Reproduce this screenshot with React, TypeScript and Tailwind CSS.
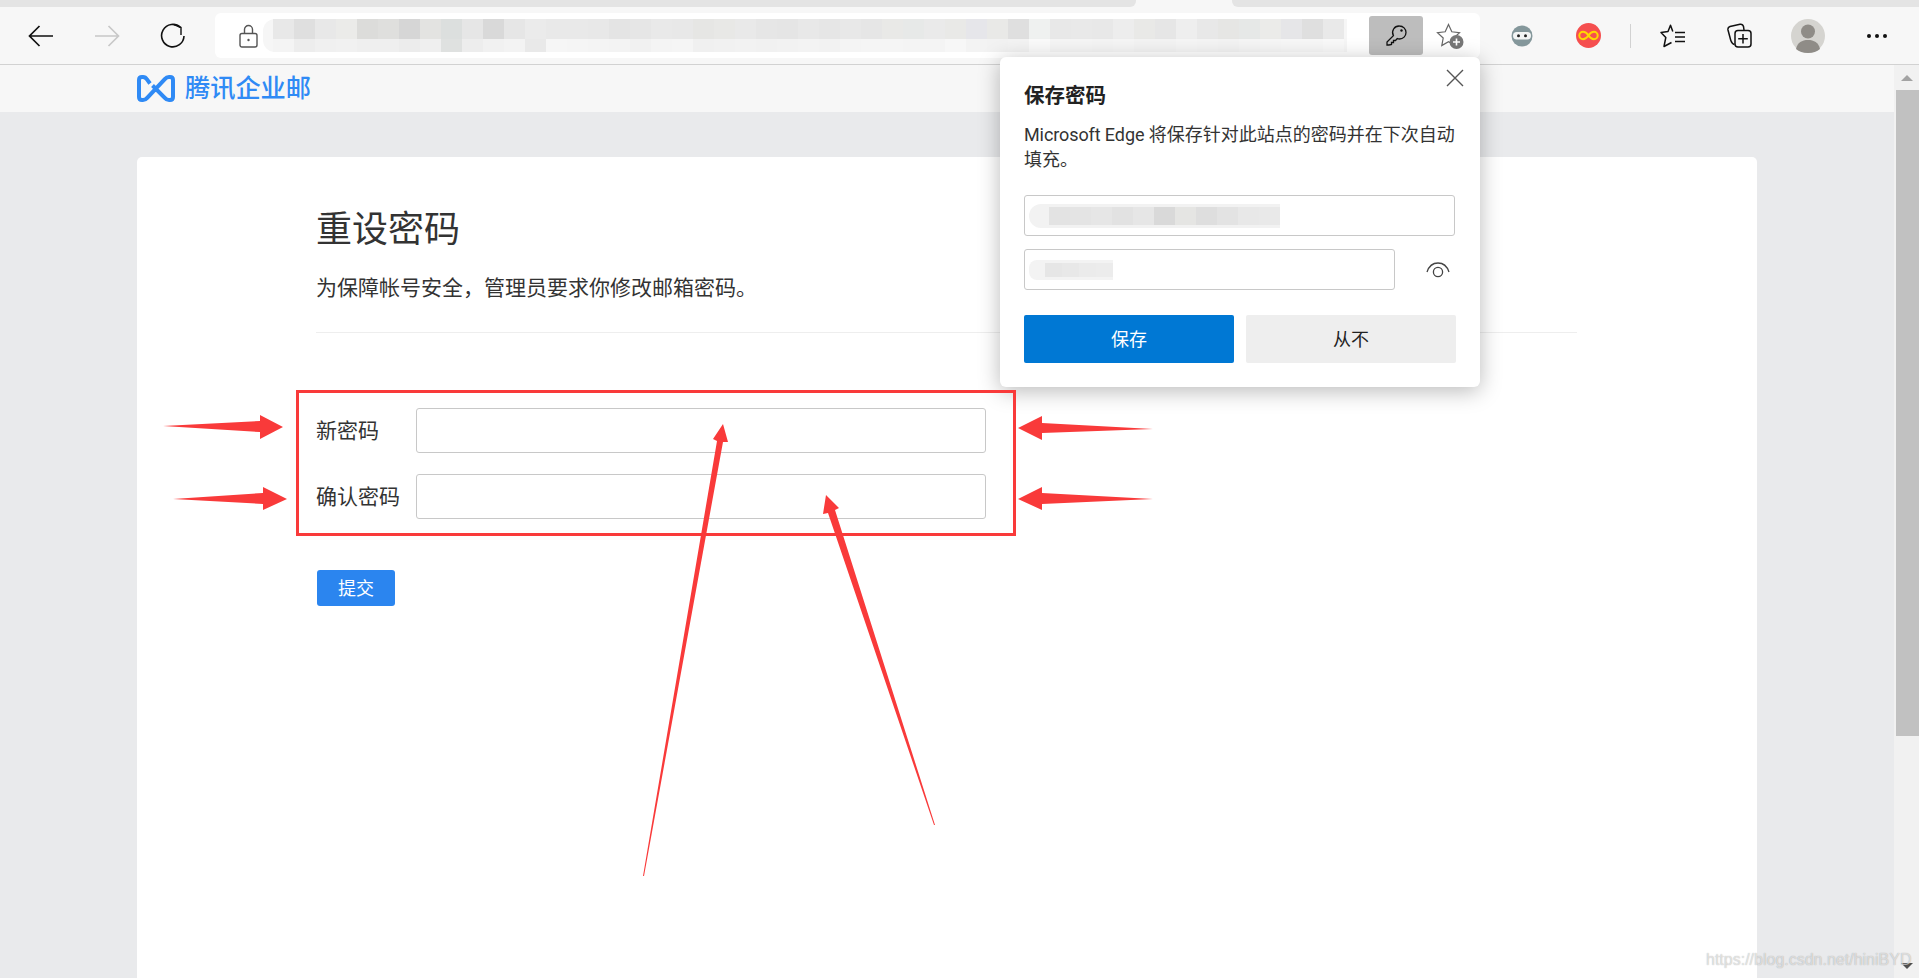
const TOP_BLUR = ["#e8e8e8","#dfdfdf","#e8e8e8","#ebebe9","#dcdcda","#dfdfdd","#d6d6d6","#e3e3e1","#dcdfde","#e6e6e6","#d9d9d9","#e6e6e6","#ebebeb","#e9e9e9","#e9e9e9","#e8e8e8","#e4e4e4","#e6e6e6","#e9e9e9","#e8e8e8","#e6e6e4","#e8e8e6","#e9e9e9","#e6e6e6","#e5e5e5","#e8e8e8","#e6e6e6","#e8e8e8","#e6e6e6","#e9e9e7","#e7e9e8","#eaeaea","#e9e9e7","#e6e6ea","#e9e9e7","#dfdfdf","#eff1f0","#e8e8e8","#e9e9e9","#e8e8e8","#ededed","#e9e9e7","#e6e6e6","#eeeeee","#e8e8e8","#e6e6e4","#e6e8e7","#ebebe9","#e6e6e8","#dfdfdf","#e9e9e9"]
const LOW_BLUR = ["#f4f4f4","#ededed","#f0f0f0","#f1f1f1","#efefef","#efefef","#ececec","#efefef","#dfe1e0","#ededed","#f1f1f1","#f3f3f3","#e9e9e9","#f6f6f6","#f5f5f5","#f4f4f4","#f3f3f3","#f1f1f1","#f4f4f4","#f5f5f5","#f0f0f0","#f1f1f1","#f2f2f2","#f1f1f1","#f2f2f2","#f3f3f3","#f2f2f2","#f4f4f4","#f5f5f5","#f5f5f5","#f4f4f4","#f4f4f4","#f7f7f7","#f3f3f3","#f2f2f2","#f3f3f3","#fafafa","#f5f5f5","#f5f5f5","#f4f4f4","#f5f5f5","#f3f3f3","#f3f3f3","#f5f5f5","#f4f4f4","#f3f3f3","#f5f5f5","#f6f6f6","#f7f7f7","#f7f7f7","#f9f9f9"]
const USER_BLUR = ["#e3e3e3","#e4e4e4","#e6e6e6","#e2e2e2","#e6e6e6","#d9d9d9","#e5e5e3","#dedede","#e3e3e3","#e8e8e8","#e9e9e9"]
const PASS_BLUR = ["#e6e6e6","#e8e8e8","#ebebeb","#ececec"]

function Back({ color }: { color: string }) {
  return (
    <svg width="26" height="22" viewBox="0 0 26 22" fill="none" stroke={color} strokeWidth="1.7">
      <path d="M1.5 11H25M11.5 1L1.5 11L11.5 21" />
    </svg>
  )
}

function ToolButton({ children }: { children: React.ReactNode }) {
  return <div className="flex h-full w-[66px] shrink-0 items-center justify-center">{children}</div>
}

function Toolbar() {
  return (
    <div className="flex h-[58px] shrink-0 items-center border-b border-[#d2d2d2] bg-[#f7f7f7] pl-2">
      <ToolButton>
        <Back color="#111" />
      </ToolButton>
      <ToolButton>
        <div className="rotate-180">
          <Back color="#c8c8c8" />
        </div>
      </ToolButton>
      <ToolButton>
        <svg width="26" height="26" viewBox="0 0 26 26" fill="none" stroke="#111" strokeWidth="1.6">
          <path d="M20.5 4.5A11.2 11.2 0 1 0 24 13" />
          <path d="M14 1.5L21 4.5V12" strokeWidth="1.4" />
        </svg>
      </ToolButton>

      {/* address bar, url is smudged in the shot */}
      <div className="ml-[9px] flex h-[45px] w-[1265px] shrink-0 items-center rounded-md bg-white pl-6">
        <svg width="19" height="24" viewBox="0 0 19 24" fill="none" stroke="#555" strokeWidth="1.4">
          <rect x="1" y="9.5" width="17" height="13.5" rx="2" />
          <path d="M5.5 9.5V5.5a4 4 0 0 1 8 0V9.5" />
          <circle cx="9.5" cy="16" r="1.2" fill="#555" stroke="none" />
        </svg>
        <div className="ml-[5px] flex w-[1084px] flex-col rounded-l-xl bg-[#f6f6f6] pl-[10px]">
          <div className="flex">
            {TOP_BLUR.map((c, i) => (
              <span key={i} className="h-[20px] w-[21px]" style={{ background: c }} />
            ))}
          </div>
          <div className="flex">
            {LOW_BLUR.map((c, i) => (
              <span key={i} className="h-[13px] w-[21px]" style={{ background: c }} />
            ))}
          </div>
        </div>
        <div className="ml-[22px] flex h-[39px] w-[54px] shrink-0 items-center justify-center rounded-[3px] bg-[#bdbdbd]">
          <svg width="21" height="21" viewBox="0 0 21 21" fill="none" stroke="#111" strokeWidth="1.3">
            <path d="M13.5 1a6.5 6.5 0 0 1 0 13c-.8 0-1.5-.1-2.2-.4L9.5 15.5H7.5V17.5H5.5V19.5L3 20H1V17L7.4 10.6A6.5 6.5 0 0 1 13.5 1Z" />
            <circle cx="15.5" cy="5.5" r="1.2" fill="#111" stroke="none" />
          </svg>
        </div>
        <div className="flex flex-1 items-center justify-center pr-1">
          <svg width="28" height="26" viewBox="0 0 28 26" fill="none">
            <path d="M12.5 1.5L15.8 8.8L23.5 9.7L17.8 15L19.3 22.6L12.5 18.8L5.8 22.6L7.2 15L1.5 9.7L9.2 8.8Z" stroke="#666" strokeWidth="1.2" />
            <circle cx="20.5" cy="19" r="7" fill="#777" />
            <path d="M20.5 15.5V22.5M17 19H24" stroke="#fff" strokeWidth="1.6" />
          </svg>
        </div>
      </div>

      <div className="ml-[9px]">
        <ToolButton>
          <svg width="22" height="22" viewBox="0 0 22 22">
            <circle cx="11" cy="11" r="10.5" fill="#84979b" />
            <rect x="2" y="7" width="18" height="7.5" rx="3.7" fill="#f3f5f5" />
            <circle cx="7.5" cy="10.7" r="1.5" fill="#222" />
            <circle cx="14.5" cy="10.7" r="1.5" fill="#222" />
          </svg>
        </ToolButton>
      </div>
      <ToolButton>
        <svg width="25" height="25" viewBox="0 0 25 25" fill="none">
          <circle cx="12.5" cy="12.5" r="12.5" fill="#f54f4f" />
          <path d="M12.5 12.5C10.5 9.5 8.8 8.8 7 8.8A3.7 3.7 0 0 0 7 16.2C8.8 16.2 10.5 15.5 12.5 12.5C14.5 9.5 16.2 8.8 18 8.8A3.7 3.7 0 0 1 18 16.2C16.2 16.2 14.5 15.5 12.5 12.5Z" stroke="#ffd800" strokeWidth="2" />
        </svg>
      </ToolButton>
      <div className="ml-[9px] h-6 w-px shrink-0 bg-[#d2d2d2]" />
      <div className="ml-[9px]">
        <ToolButton>
          <svg width="26" height="24" viewBox="0 0 26 24" fill="none" stroke="#111" strokeWidth="1.5">
            <path d="M12.8 7.5L10.5 1.2L8 7.5L1 8.5L5.8 13.5L4 22.5L11.5 18.5" strokeLinejoin="round" />
            <path d="M15 8.5H25M15 13H25M15 17.5H25" />
          </svg>
        </ToolButton>
      </div>
      <ToolButton>
        <svg width="25" height="25" viewBox="0 0 25 25" fill="none" stroke="#111" strokeWidth="1.5">
          <path d="M7.5 21.5C5 21 4.5 19.5 3.8 17.5L1 7C.6 5 1.4 4 3 3.5L13 1.2C15 .9 16 1.5 16.5 3.5L17 7" />
          <rect x="8" y="7.5" width="16" height="16.5" rx="3" fill="#f7f7f7" />
          <path d="M16 11V20.5M11.2 15.8H20.8" />
        </svg>
      </ToolButton>
      <div className="ml-[3px]">
        <ToolButton>
          <svg width="34" height="34" viewBox="0 0 34 34">
            <circle cx="17" cy="17" r="17" fill="#d5d4d0" />
            <circle cx="17" cy="12.5" r="7" fill="#8f8c87" />
            <path d="M5 30C6.5 23.5 11 21 17 21S27.5 23.5 29 30C26 32.5 22 34 17 34S8 32.5 5 30Z" fill="#8f8c87" />
          </svg>
        </ToolButton>
      </div>
      <div className="ml-[3px]">
        <ToolButton>
          <div className="flex gap-[4px]">
            <span className="h-1 w-1 rounded-full bg-[#111]" />
            <span className="h-1 w-1 rounded-full bg-[#111]" />
            <span className="h-1 w-1 rounded-full bg-[#111]" />
          </div>
        </ToolButton>
      </div>
    </div>
  )
}

function Logo() {
  return (
    <div className="flex h-[47px] shrink-0 items-center bg-[#f7f7f7] pl-[137px]">
      <svg width="38" height="27" viewBox="0 0 38 27" fill="none" stroke="#2f8af5" strokeWidth="4">
        <path d="M13 8.5L10 4.5Q8.5 2 6 2H5Q2 2 2 5V22Q2 25 5 25H6Q8.5 25 10 23L28 4Q29.5 2 32 2H33Q36 2 36 5V22Q36 25 33 25H32Q29.5 25 28 23L15.5 10.5" />
      </svg>
      <span className="mb-[2px] ml-[10px] text-[25.2px] leading-none font-medium text-[#2f8af5]">腾讯企业邮</span>
    </div>
  )
}

function Field({ label }: { label: string }) {
  return (
    <div className="flex items-center">
      <label className="w-[100px] text-[21px] text-[#333]">{label}</label>
      <input type="password" className="h-[45px] w-[570px] rounded-[3px] border border-[#c8c8c8] bg-white" />
    </div>
  )
}

function Card() {
  return (
    <div className="h-full rounded-t-[5px] bg-white pr-[180px] pl-[179px]">
      <h1 className="pt-[47px] text-[36px] leading-[50px] font-normal text-[#333]">重设密码</h1>
      <p className="mt-[17px] font-['Noto_Sans_CJK_SC',sans-serif] text-[21px] leading-[30px] text-[#333]">
        {"为保障帐号安全\uFF0C管理员要求你修改邮箱密码。"}
      </p>
      <div className="mt-[31px] border-t border-[#eeeeee]" />
      <div className="mt-[75px] flex flex-col gap-[21px]">
        <Field label="新密码" />
        <Field label="确认密码" />
      </div>
      <button className="mt-[51px] ml-px h-9 w-[78px] rounded-[3px] bg-[#2b85ef] text-[18px] text-white">提交</button>
    </div>
  )
}

function Scrollbar() {
  return (
    <div className="flex w-[25px] shrink-0 flex-col items-end bg-[#f1f1f1]">
      <div className="flex h-[25px] w-full items-center justify-center">
        <span className="h-0 w-0 border-x-[6px] border-b-[6px] border-x-transparent border-b-[#a3a3a3]" />
      </div>
      <div className="h-[646px] w-[23px] bg-[#c1c1c1]" />
      <div className="mt-auto flex h-[24px] w-full items-center justify-center">
        <span className="h-0 w-0 border-x-[6px] border-t-[6px] border-x-transparent border-t-[#505050]" />
      </div>
    </div>
  )
}

function SavePopup() {
  return (
    <div className="absolute top-[57px] left-[1000px] w-[480px] rounded-md bg-white px-6 pt-6 pb-6 shadow-[0_4px_22px_rgba(0,0,0,0.28)]">
      <svg className="absolute top-3 right-4" width="18" height="18" viewBox="0 0 18 18" stroke="#555" strokeWidth="1.4">
        <path d="M1 1L17 17M17 1L1 17" />
      </svg>
      <h2 className="text-[20.5px] leading-7 font-bold text-[#222]">保存密码</h2>
      <p className="mt-[13px] font-['Roboto','Noto_Sans_CJK_SC',sans-serif] text-[18px] leading-[25px] whitespace-nowrap text-[#333]">
        <span className="tracking-[-0.1px]">Microsoft Edge</span> 将保存针对此站点的密码并在下次自动
        <br />
        填充。
      </p>
      <div className="mt-[23px] flex h-[41px] w-[431px] items-center rounded-[3px] border border-[#c8c8c8] pl-1">
        <div className="flex rounded-l-xl bg-[#f2f2f2] py-[3px] pl-5">
          {USER_BLUR.map((c, i) => (
            <span key={i} className="h-[18px] w-[21px]" style={{ background: c }} />
          ))}
        </div>
      </div>
      <div className="mt-[13px] flex items-center">
        <div className="flex h-[41px] w-[371px] items-center rounded-[3px] border border-[#c8c8c8] pl-1">
          <div className="flex rounded-l-lg bg-[#f3f3f3] py-[3px] pl-4">
            {PASS_BLUR.map((c, i) => (
              <span key={i} className="h-[14px] w-[17px]" style={{ background: c }} />
            ))}
          </div>
        </div>
        <svg className="ml-[31px]" width="24" height="16" viewBox="0 0 24 16" fill="none" stroke="#444" strokeWidth="1.3">
          <path d="M1 10C3 4 7 1 12 1S21 4 23 10" />
          <circle cx="12" cy="10" r="4.6" />
        </svg>
      </div>
      <div className="mt-[25px] flex gap-3">
        <button className="h-12 w-[210px] rounded-[2px] bg-[#0078d4] text-[18px] text-white">保存</button>
        <button className="h-12 w-[210px] rounded-[2px] bg-[#eeeeee] text-[18px] text-[#222]">从不</button>
      </div>
    </div>
  )
}

// red marks someone drew on top of the screenshot
function Annotations() {
  return (
    <svg className="pointer-events-none absolute top-0 left-0" width="1919" height="978" fill="#f93a3a">
      <rect x="297.5" y="391.5" width="717" height="143" fill="none" stroke="#f93a3a" strokeWidth="3" />
      <polygon points="163,426 260,421 260,415 283,427 260,439 260,432" />
      <polygon points="173,499 263,493 263,487 287,499 263,510 263,504" />
      <polygon points="1153,429 1042,423 1042,416 1018,428 1042,440 1042,433" />
      <polygon points="1153,499 1042,493 1042,487 1018,499 1042,510 1042,504" />
      <polygon points="643,876 717,441 713,439 723,424 728,442 723,442 644,876" />
      <polygon points="934,825 828,513 823,514 826,495 839,508 835,510 935,825" />
    </svg>
  )
}

export default function App() {
  return (
    <div className="relative flex h-[978px] w-[1919px] flex-col overflow-hidden bg-[#e9eaec] font-['Noto_Sans','Noto_Sans_CJK_SC',sans-serif]">
      {/* tab strip */}
      <div className="flex h-[7px] shrink-0 bg-[#f7f7f7]">
        <div className="w-[1136px] rounded-br-md bg-[#e4e4e4]" />
        <div className="w-[96px]" />
        <div className="flex-1 rounded-bl-md bg-[#e4e4e4]" />
      </div>
      <Toolbar />
      <div className="flex min-h-0 flex-1">
        <div className="flex min-w-0 flex-1 flex-col">
          <Logo />
          <div className="min-h-0 flex-1 px-[137px] pt-[45px]">
            <Card />
          </div>
        </div>
        <Scrollbar />
      </div>
      <SavePopup />
      <Annotations />
      <span className="absolute top-[950px] left-[1706px] font-['Liberation_Sans',sans-serif] text-[16px] leading-5 text-white/60 [text-shadow:0_0_1px_rgba(0,0,0,0.35)]">
        https://blog.csdn.net/hiniBYD
      </span>
    </div>
  )
}
